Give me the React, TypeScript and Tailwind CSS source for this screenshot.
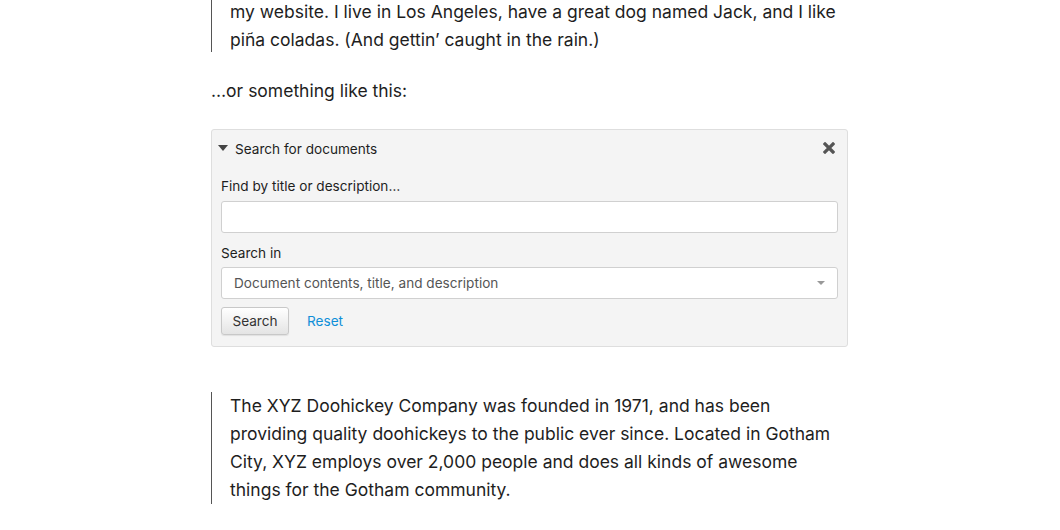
import React from "react";

export default function App() {
  const body = { fontFamily: "Inter, 'Noto Sans', sans-serif" };
  const panel = { fontFamily: "Inter, 'Liberation Sans', sans-serif" };
  return (
    <div className="w-[1060px] h-[530px] overflow-hidden bg-white text-[#1e1e1e]" style={body}>
      <div className="w-[637px] ml-[211px] text-[17.5px] leading-[28px]">
        <blockquote className="-mt-[2px] border-l border-[#555] pl-[18px] h-[54px] whitespace-nowrap">
          <p>my website. I live in Los Angeles, have a great dog named Jack, and I like<br />
          piña coladas. (And gettin’ caught in the rain.)</p>
        </blockquote>
        <p className="mt-[25px]">…or something like this:</p>

        <div className="mt-[24px] h-[218px] border border-[#dedede] rounded-[3px] bg-[#f4f4f4] px-[9px] text-[13.6px] leading-[20px] text-[#1e1e1e]" style={panel}>
          <div className="flex items-center justify-between pt-[9px]">
            <div className="flex items-center -ml-[3px]">
              <svg width="10" height="6" viewBox="0 0 10 6" className="mr-[7px] -mt-[2px]">
                <path d="M0 0 H10 L5 6 Z" fill="#444" />
              </svg>
              <span>Search for documents</span>
            </div>
            <svg width="12" height="12" viewBox="0 0 12 12" className="mr-[3px] -mt-[2px]">
              <path d="M2 2 L10 10 M10 2 L2 10" stroke="#555" strokeWidth="3.2" strokeLinecap="square" />
            </svg>
          </div>
          <div className="mt-[17px]">Find by title or description…</div>
          <div className="mt-[5px] h-[32px] bg-white border border-[#d0d0d0] rounded-[3px]" />
          <div className="mt-[10px]">Search in</div>
          <div className="mt-[4px] h-[32px] bg-white border border-[#d0d0d0] rounded-[3px] flex items-center justify-between pl-[12px] pr-[12px]">
            <span className="text-[#555]">Document contents, title, and description</span>
            <svg width="8" height="4" viewBox="0 0 8 4"><path d="M0 0 H8 L4 4 Z" fill="#999" /></svg>
          </div>
          <div className="mt-[8px] flex items-center">
            <button className="h-[28px] w-[68px] border border-[#c8c8c8] rounded-[3px] bg-gradient-to-b from-white to-[#e4e4e4] text-[#333] shadow-[0_1px_1px_rgba(0,0,0,0.08)]" style={panel}>Search</button>
            <a className="ml-[18px] text-[#0f8fd8]">Reset</a>
          </div>
        </div>

        <blockquote className="mt-[45px] border-l border-[#555] pl-[18px] h-[112px] whitespace-nowrap">
          <p>The XYZ Doohickey Company was founded in 1971, and has been<br />
          providing quality doohickeys to the public ever since. Located in Gotham<br />
          City, XYZ employs over 2,000 people and does all kinds of awesome<br />
          things for the Gotham community.</p>
        </blockquote>
      </div>
    </div>
  );
}
